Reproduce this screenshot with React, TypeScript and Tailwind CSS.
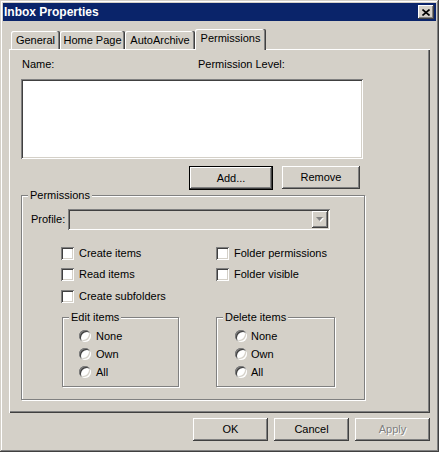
import React from "react";
import { clsx, type ClassValue } from "clsx";
import { twMerge } from "tailwind-merge";

function cn(...inputs: ClassValue[]) {
  return twMerge(clsx(inputs));
}

// classic 3D edges
const raised =
  "shadow-[inset_-1px_-1px_#404040,inset_1px_1px_#ffffff,inset_-2px_-2px_#808080,inset_2px_2px_#d4d0c8]";
const sunken =
  "shadow-[inset_1px_1px_#808080,inset_-1px_-1px_#ffffff,inset_2px_2px_#404040,inset_-2px_-2px_#d4d0c8]";

const Group: React.FC<{ label: string; className?: string; children?: React.ReactNode }> = ({
  label,
  className,
  children,
}) => (
  <fieldset
    className={cn(
      "border border-[#808080] shadow-[1px_1px_0_#ffffff,inset_1px_1px_0_#ffffff]",
      className
    )}
  >
    <legend className="ml-[6px] px-[2px] bg-[#d4d0c8]">{label}</legend>
    {children}
  </fieldset>
);

const Check: React.FC<{ label: string }> = ({ label }) => (
  <div className="flex items-center gap-[5px] h-[13px]">
    <span className={cn("w-[13px] h-[13px] bg-white shrink-0", sunken)} />
    <span>{label}</span>
  </div>
);

const Radio: React.FC<{ label: string; gap?: string }> = ({ label, gap = "gap-[5px]" }) => (
  <div className={cn("flex items-center h-[18px]", gap)}>
    <span className={cn("w-[12px] h-[12px] rounded-full bg-white shrink-0", sunken)} />
    <span>{label}</span>
  </div>
);

const Btn: React.FC<{ label: string; className?: string; disabled?: boolean }> = ({
  label,
  className,
  disabled,
}) => (
  <button
    className={cn(
      "h-[23px] w-[75px] bg-[#d4d0c8] flex items-center justify-center",
      raised,
      disabled && "text-[#808080] [text-shadow:1px_1px_0_#ffffff]",
      className
    )}
  >
    {label}
  </button>
);

export default function App() {
  const tabs = [
    { name: "General", w: "w-[49px]" },
    { name: "Home Page", w: "w-[65px]" },
    { name: "AutoArchive", w: "w-[70px]" },
  ];

  return (
    <div
      className={cn(
        "w-[439px] h-[452px] bg-[#d4d0c8] p-[3px] font-['Liberation_Sans',Arial,sans-serif] text-[11px] leading-[13px] text-black select-none",
        "shadow-[inset_-1px_-1px_#404040,inset_1px_1px_#d4d0c8,inset_-2px_-2px_#808080,inset_2px_2px_#ffffff]"
      )}
    >
      {/* title bar */}
      <div className="h-[18px] bg-[#0a246a] flex items-center justify-between pl-[1px] pr-[2px]">
        <span className="text-white font-bold text-[12px]">Inbox Properties</span>
        <button className={cn("w-[16px] h-[14px] bg-[#d4d0c8] flex items-center justify-center", raised)}>
          <svg width="8" height="7" viewBox="0 0 8 7">
            <path d="M0.5 0.5 L7.5 6.5 M7.5 0.5 L0.5 6.5" stroke="#000" strokeWidth="1.6" />
          </svg>
        </button>
      </div>

      {/* tabs */}
      <div className="mt-[8px] ml-[6px] h-[20px] flex items-end pl-[2px]">
        {tabs.map((t) => (
          <div
            key={t.name}
            className={cn(
              "h-[18px] flex items-center justify-center rounded-t-[2px] shadow-[inset_-1px_0_#404040,inset_-2px_0_#808080,inset_1px_1px_#ffffff]",
              t.w
            )}
          >
            {t.name}
          </div>
        ))}
        <div className="relative z-10 h-[21px] -mb-px w-[71px] bg-[#d4d0c8] flex items-center justify-center pb-[2px] rounded-t-[2px] shadow-[inset_-1px_0_#404040,inset_-2px_0_#808080,inset_1px_1px_#ffffff]">
          Permissions
        </div>
      </div>

      {/* tab panel */}
      <div className="ml-[6px] w-[421px] h-[364px] flex flex-col shadow-[inset_1px_1px_#ffffff,inset_-1px_-1px_#404040,inset_-2px_-2px_#808080]">
        <div className="mt-[9px] pl-[13px] flex">
          <span className="w-[176px]">Name:</span>
          <span>Permission Level:</span>
        </div>

        <div className={cn("mt-[8px] ml-[12px] w-[342px] h-[80px] bg-white", sunken)} />

        <div className="mt-[7px] ml-[180px] flex items-start gap-[9px]">
          <button className="w-[84px] h-[24px] border border-black bg-[#d4d0c8] flex items-center justify-center shadow-[inset_-1px_-1px_#404040,inset_1px_1px_#ffffff,inset_-2px_-2px_#808080]">
            Add...
          </button>
          <Btn label="Remove" className="w-[78px]" />
        </div>

        <Group label="Permissions" className="ml-[12px] -mt-px w-[344px] h-[211px]">
          <div className="mt-[7px] pl-[9px] flex items-center">
            <span className="w-[37px]">Profile:</span>
            <div className={cn("w-[262px] h-[21px] bg-[#d4d0c8] flex justify-end p-[2px]", sunken)}>
              <div className={cn("w-[16px] h-[17px] bg-[#d4d0c8] flex items-center justify-center", raised)}>
                <svg width="8" height="5" viewBox="0 0 8 5">
                  <polygon points="1,1 8,1 4.5,5" fill="#ffffff" />
                  <polygon points="0,0 7,0 3.5,4" fill="#808080" />
                </svg>
              </div>
            </div>
          </div>

          <div className="mt-[17px] ml-[39px] grid grid-cols-[155px_1fr]">
            <div className="flex flex-col">
              <Check label="Create items" />
              <div className="mt-[8px]">
                <Check label="Read items" />
              </div>
              <div className="mt-[9px]">
                <Check label="Create subfolders" />
              </div>
            </div>
            <div className="flex flex-col">
              <Check label="Folder permissions" />
              <div className="mt-[8px]">
                <Check label="Folder visible" />
              </div>
            </div>
          </div>

          <div className="mt-[8px] ml-[40px] flex">
            <Group label="Edit items" className="w-[117px] h-[76px]">
              <div className="mt-[3px] pl-[16px] flex flex-col">
                <Radio label="None" />
                <Radio label="Own" />
                <Radio label="All" />
              </div>
            </Group>
            <Group label="Delete items" className="ml-[37px] w-[119px] h-[76px]">
              <div className="mt-[3px] pl-[18px] flex flex-col">
                <Radio label="None" gap="gap-[4px]" />
                <Radio label="Own" gap="gap-[4px]" />
                <Radio label="All" gap="gap-[4px]" />
              </div>
            </Group>
          </div>
        </Group>
      </div>

      {/* dialog buttons */}
      <div className="mt-[5px] flex justify-end gap-[6px] pr-[6px]">
        <Btn label="OK" />
        <Btn label="Cancel" />
        <Btn label="Apply" disabled />
      </div>
    </div>
  );
}
